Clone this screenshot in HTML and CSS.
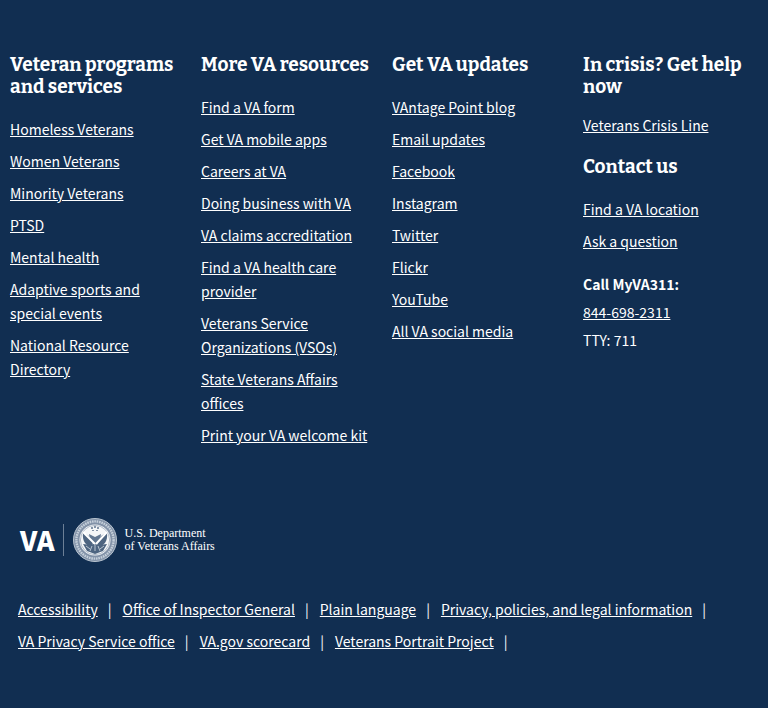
FILE: index.html
```
<!DOCTYPE html>
<html lang="en">
<head>
<meta charset="utf-8">
<meta name="viewport" content="width=device-width, initial-scale=1">
<title>VA.gov</title>
<link rel="stylesheet" href="styles.css">
</head>
<body>
<footer class="footer">
  <div class="columns">
    <section class="column">
      <h2>Veteran programs and services</h2>
      <ul class="links">
        <li><a href="#">Homeless Veterans</a></li>
        <li><a href="#">Women Veterans</a></li>
        <li><a href="#">Minority Veterans</a></li>
        <li><a href="#">PTSD</a></li>
        <li><a href="#">Mental health</a></li>
        <li><a href="#">Adaptive sports and special events</a></li>
        <li><a href="#">National Resource Directory</a></li>
      </ul>
    </section>
    <section class="column">
      <h2>More VA resources</h2>
      <ul class="links">
        <li><a href="#">Find a VA form</a></li>
        <li><a href="#">Get VA mobile apps</a></li>
        <li><a href="#">Careers at VA</a></li>
        <li><a href="#">Doing business with VA</a></li>
        <li><a href="#">VA claims accreditation</a></li>
        <li><a href="#">Find a VA health care provider</a></li>
        <li><a href="#">Veterans Service Organizations (VSOs)</a></li>
        <li><a href="#">State Veterans Affairs offices</a></li>
        <li><a href="#">Print your VA welcome kit</a></li>
      </ul>
    </section>
    <section class="column">
      <h2>Get VA updates</h2>
      <ul class="links">
        <li><a href="#">VAntage Point blog</a></li>
        <li><a href="#">Email updates</a></li>
        <li><a href="#">Facebook</a></li>
        <li><a href="#">Instagram</a></li>
        <li><a href="#">Twitter</a></li>
        <li><a href="#">Flickr</a></li>
        <li><a href="#">YouTube</a></li>
        <li><a href="#">All VA social media</a></li>
      </ul>
    </section>
    <section class="column">
      <h2>In crisis? Get help now</h2>
      <p class="crisis"><a href="#">Veterans Crisis Line</a></p>
      <h2>Contact us</h2>
      <ul class="links">
        <li><a href="#">Find a VA location</a></li>
        <li><a href="#">Ask a question</a></li>
      </ul>
      <div class="phone">
        <strong>Call MyVA311:</strong>
        <a href="#">844-698-2311</a>
        <span>TTY: 711</span>
      </div>
    </section>
  </div>
  <a class="logo" href="#" aria-label="VA, U.S. Department of Veterans Affairs">
    <span class="logo-va">VA</span>
    <svg class="seal" viewBox="0 0 46 46" aria-hidden="true">
      <circle cx="23" cy="23" r="21.5" fill="#8292a8" stroke="#b9c4d0"/>
      <circle cx="23" cy="23" r="18.6" fill="none" stroke="#c6d0db" stroke-width="2.4" stroke-dasharray="1.6 .8"/>
      <circle cx="23" cy="23" r="15.5" fill="#f4f6f8"/>
      <circle cx="23" cy="23" r="14.6" fill="none" stroke="#8292a8" stroke-width=".6"/>
      <path d="M11 16c4 1 8 4 10 9l-1 5c-6-1-10-6-9-14zM35 16c-4 1-8 4-10 9l1 5c6-1 10-6 9-14z" fill="#4d6480"/>
      <path d="M17 17l6 3 6-3-1 6-5 4-5-4z" fill="#627791"/>
      <path d="M11 27l8 1 4-2 4 2 8-1-4 7-8 3-8-3z" fill="#4d6480"/>
      <path d="M11 15l12 12M35 15L24 27" fill="none" stroke="#fff" stroke-width="2"/>
      <path d="M14 29l4 3m14-3-4 3M20 29l-2 5m8-5 2 5M23 27v7" fill="none" stroke="#b9c4d0"/>
      <path d="M20 10v2m3-3v2m3-1v2m-5 1v1m4-1v1" stroke="#536985" stroke-width="1.4"/>
    </svg>
    <span class="logo-name"><span>U.S. Department</span> <span>of Veterans Affairs</span></span>
  </a>
  <ul class="legal">
    <li><a href="#">Accessibility</a></li>
    <li><a href="#">Office of Inspector General</a></li>
    <li><a href="#">Plain language</a></li>
    <li><a href="#">Privacy, policies, and legal information</a></li>
    <li><a href="#">VA Privacy Service office</a></li>
    <li><a href="#">VA.gov scorecard</a></li>
    <li><a href="#">Veterans Portrait Project</a></li>
  </ul>
</footer>
</body>
</html>
```
FILE: styles.css
```
* { box-sizing: border-box; }
body {
  margin: 0;
  background: #112e51;
  color: #fff;
  font: 14px/24px "Source Sans Pro", "Noto Sans CJK JP", "Noto Sans", sans-serif;
}
a { color: inherit; text-decoration: underline; }
ul { list-style: none; margin: 0; padding: 0; }
.footer { padding: 54px 10px 48px; }
.columns {
  display: grid;
  grid-template-columns: repeat(4, 1fr);
  gap: 16px;
}
h2 {
  margin: 0 0 19px;
  font: bold 19px/22px Bitter, "Noto Serif", "DejaVu Serif", serif;
}
.links { display: grid; gap: 8px; }
.crisis { margin: -4px 0 19px; }
.phone { display: grid; gap: 4px; margin-top: 19px; justify-items: start; }
.logo {
  display: flex;
  width: fit-content;
  align-items: center;
  margin: 70px 10px 34px;
  text-decoration: none;
}
.logo-va {
  font: 900 27px/32px "Noto Sans CJK JP", sans-serif;
  padding-right: 8px;
  border-right: 1px solid #6c7f96;
}
.seal { width: 46px; height: 46px; margin: 0 7px 0 8px; }
.logo-name { display: grid; font: 12px/13px "Liberation Serif", serif; }
.legal { display: flex; flex-wrap: wrap; padding: 0 8px; row-gap: 8px; }
.legal li::after { content: "|"; margin: 0 11px 0 10px; }
```
